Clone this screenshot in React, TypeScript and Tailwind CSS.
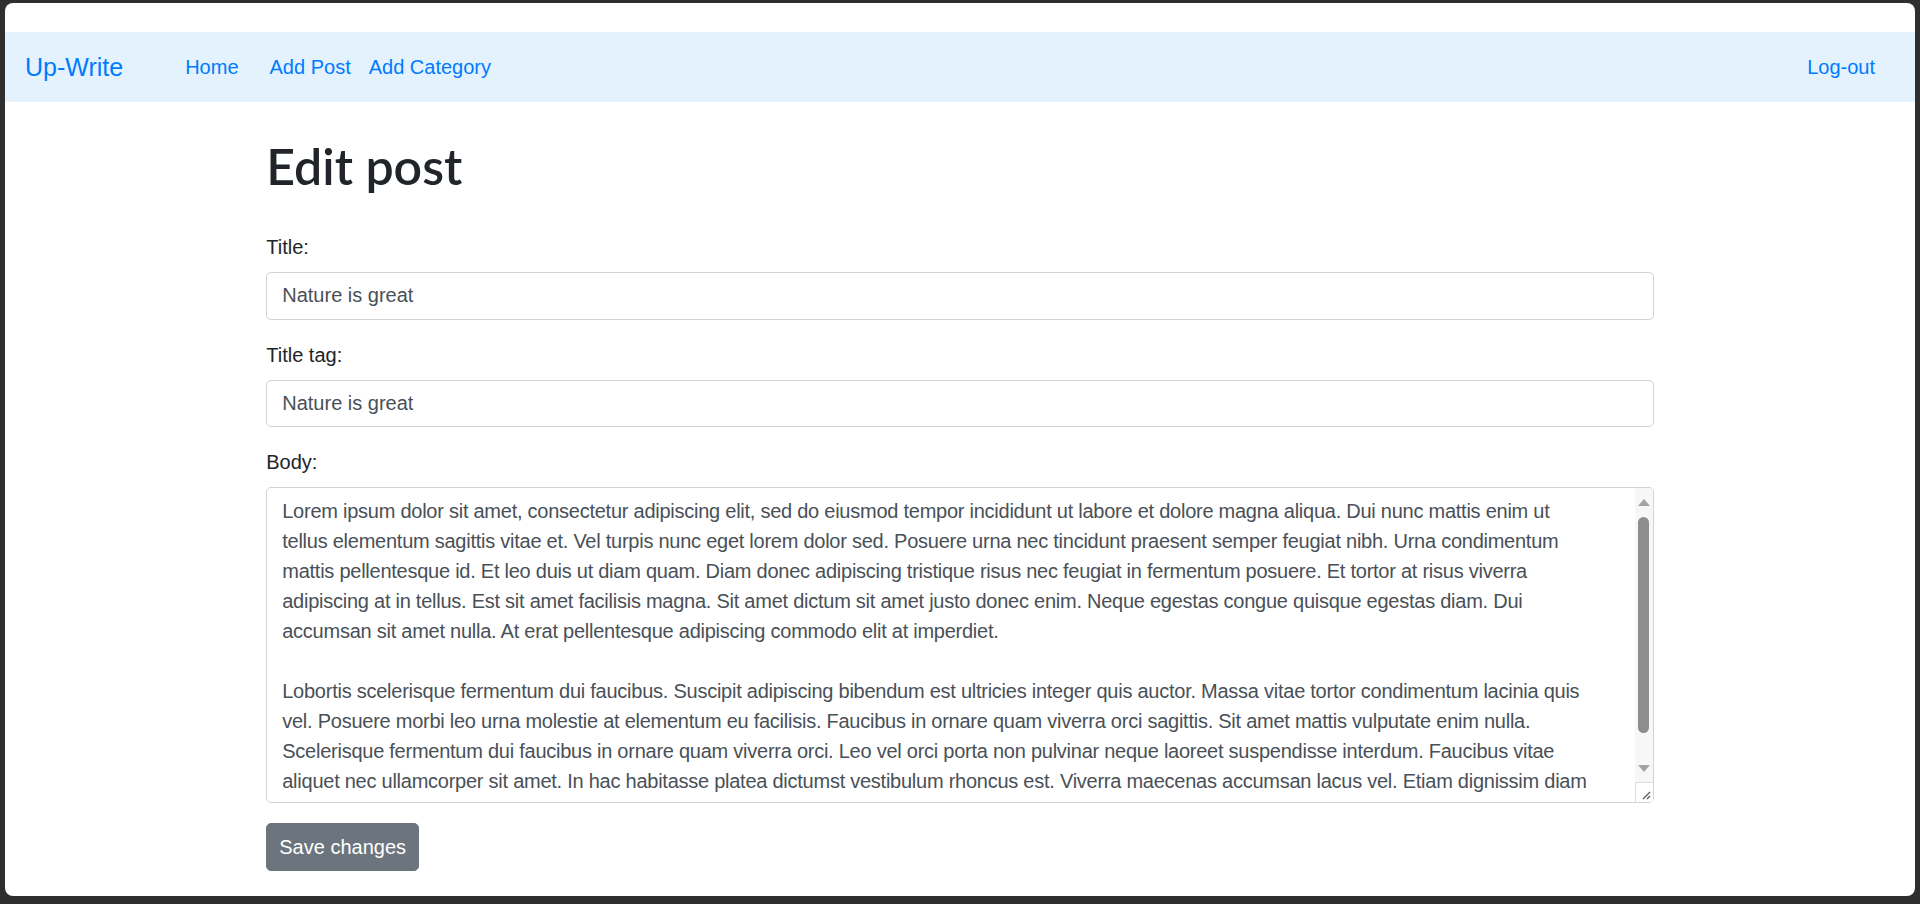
import React from 'react';

// lines kept as in the screenshot so the wrap points match
const BODY_LINES = [
  'Lorem ipsum dolor sit amet, consectetur adipiscing elit, sed do eiusmod tempor incididunt ut labore et dolore magna aliqua. Dui nunc mattis enim ut',
  'tellus elementum sagittis vitae et. Vel turpis nunc eget lorem dolor sed. Posuere urna nec tincidunt praesent semper feugiat nibh. Urna condimentum',
  'mattis pellentesque id. Et leo duis ut diam quam. Diam donec adipiscing tristique risus nec feugiat in fermentum posuere. Et tortor at risus viverra',
  'adipiscing at in tellus. Est sit amet facilisis magna. Sit amet dictum sit amet justo donec enim. Neque egestas congue quisque egestas diam. Dui',
  'accumsan sit amet nulla. At erat pellentesque adipiscing commodo elit at imperdiet.',
  '',
  'Lobortis scelerisque fermentum dui faucibus. Suscipit adipiscing bibendum est ultricies integer quis auctor. Massa vitae tortor condimentum lacinia quis',
  'vel. Posuere morbi leo urna molestie at elementum eu facilisis. Faucibus in ornare quam viverra orci sagittis. Sit amet mattis vulputate enim nulla.',
  'Scelerisque fermentum dui faucibus in ornare quam viverra orci. Leo vel orci porta non pulvinar neque laoreet suspendisse interdum. Faucibus vitae',
  'aliquet nec ullamcorper sit amet. In hac habitasse platea dictumst vestibulum rhoncus est. Viverra maecenas accumsan lacus vel. Etiam dignissim diam',
  'quis enim lobortis scelerisque fermentum dui faucibus. Ac tortor vitae purus faucibus ornare suspendisse sed nisi lacus.',
];

// fake classic scrollbar + resize grip, the sandbox browser hides native ones
const ScrollColumn: React.FC = () => (
  <div className="w-[18px] flex flex-col bg-[#f7f7f7] shrink-0">
    <div className="h-[28px] flex items-center justify-center">
      <svg width="12" height="7" viewBox="0 0 12 7">
        <polygon points="6,0 12,7 0,7" fill="#a3a3a3" />
      </svg>
    </div>
    <div className="flex-1 flex justify-center pt-[1px]">
      <div className="w-[11px] h-[216px] rounded-full bg-[#8d8d8d]" />
    </div>
    <div className="h-[28px] flex items-center justify-center">
      <svg width="12" height="7" viewBox="0 0 12 7">
        <polygon points="0,0 12,0 6,7" fill="#a3a3a3" />
      </svg>
    </div>
    <div className="h-[20px] bg-white border-t border-l border-[#dcdcdc] flex items-end justify-end pr-[2px] pb-[2px]">
      <svg width="9" height="9" viewBox="0 0 9 9">
        <line x1="1" y1="8" x2="8" y2="1" stroke="#5a5a5a" strokeWidth="1.2" />
        <line x1="5" y1="8" x2="8" y2="5" stroke="#5a5a5a" strokeWidth="1.2" />
      </svg>
    </div>
  </div>
);

const Field: React.FC<{ label: string; value: string }> = ({ label, value }) => (
  <div className="mb-[20px]">
    <label className="block mb-[10px] text-[20px] leading-[30px]">{label}</label>
    <input
      type="text"
      defaultValue={value}
      className="block w-full h-[47.5px] px-[15px] border border-[#ced4da] rounded-[5px] text-[20px] text-[#495057] bg-white outline-none"
    />
  </div>
);

export default function App() {
  return (
    <div className="h-screen w-full bg-[#2e2e2e] pl-[5px] pr-[5px] pt-[3px] pb-[8px] flex font-['Liberation_Sans',Arial,sans-serif] text-[#212529]">
      <div className="flex-1 bg-white rounded-[8px] overflow-hidden pt-[29px] flex flex-col">
        <nav className="h-[70px] shrink-0 bg-[#e3f2fd] flex items-center px-[20px] text-[#007bff] text-[20px]">
          <a className="text-[25px] leading-[37px]">Up-Write</a>
          <a className="ml-[62px]">Home</a>
          <a className="ml-[31px]">Add Post</a>
          <a className="ml-[18px]">Add Category</a>
          <a className="ml-auto mr-[20px]">Log-out</a>
        </nav>

        <main className="w-[1425px] mx-auto px-[18.75px]">
          <h1 className="mt-[34px] mb-[36px] font-['Lato',sans-serif] font-semibold text-[50px] leading-[60px]">
            Edit post
          </h1>

          <form>
            <Field label="Title:" value="Nature is great" />
            <Field label="Title tag:" value="Nature is great" />

            <div className="mb-[20px]">
              <label className="block mb-[10px] text-[20px] leading-[30px]">Body:</label>
              <div className="flex h-[316px] border border-[#ced4da] rounded-[5px] overflow-hidden bg-white">
                <textarea
                  wrap="off"
                  defaultValue={BODY_LINES.join('\n')}
                  className="flex-1 resize-none overflow-hidden px-[15px] py-[7.5px] text-[20px] leading-[30px] tracking-[-0.25px] text-[#495057] outline-none"
                />
                <ScrollColumn />
              </div>
            </div>

            <button
              type="button"
              className="h-[47.5px] px-[12px] rounded-[5px] bg-[#6c757d] border border-[#6c757d] text-white text-[20px] leading-[30px]"
            >
              Save changes
            </button>
          </form>
        </main>
      </div>
    </div>
  );
}
